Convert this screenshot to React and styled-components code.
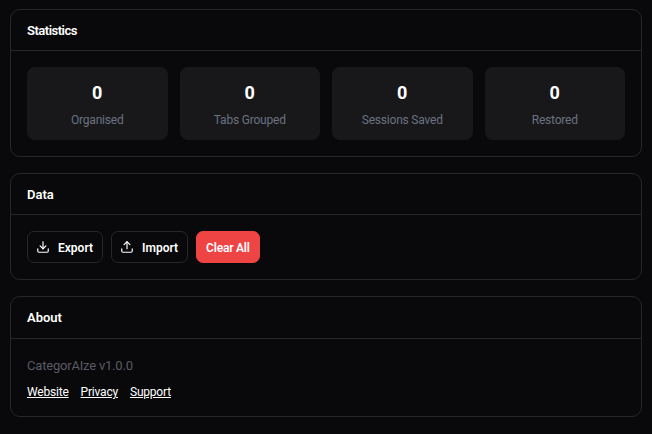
import React from "react";
import styled, { createGlobalStyle } from "styled-components";

const FONT = `Roboto, "Noto Sans", sans-serif`;
const Global = createGlobalStyle`
  html, body { margin: 0; padding: 0; background: #09090b; }
  body { font-family: ${FONT}; color: #fff; }
  * { box-sizing: border-box; }
`;
const Page = styled.div`
  display: flex; flex-direction: column; gap: 16px;
  padding: 9px 10px 16px;
`;
const Card = styled.section`
  border: 1px solid #27272a; border-radius: 10px; background: #09090b;
`;
const CardHeader = styled.header`
  height: ${p => (p.$tall ? 42 : 41)}px; padding: ${p => (p.$tall ? 0 : 1)}px 16px 0; display: flex; align-items: center;
  border-bottom: 1px solid #27272a;
`;
const Title = styled.h2`
  margin: 0; font-size: 13px; font-weight: 600; line-height: 18px; color: #fff;
  letter-spacing: ${p => p.$tracking || 0}px;
`;
const CardBody = styled.div`padding: 16px;`;
const StatGrid = styled.div`
  display: grid; grid-template-columns: repeat(4, 1fr); gap: 12px;
`;
const Stat = styled.div`
  height: 73px; border-radius: 8px; background: #18181b;
  display: flex; flex-direction: column; align-items: center; padding-top: 13px;
`;
const StatValue = styled.div`
  font-size: 18px; font-weight: 700; line-height: 25px; color: #fff;
`;
const StatLabel = styled.div`
  margin-top: 7px; font-size: 12px; line-height: 17px; color: #6b7280; letter-spacing: -0.2px;
`;
const Actions = styled.div`display: flex; gap: 8px;`;
const Button = styled.button`
  height: 32px; padding: 2px 9px 0 ${p => (p.$danger ? 9 : 8)}px; display: flex; align-items: center; gap: 8px;
  font: 600 12px ${FONT}; color: #fff;
  border-radius: 7px; cursor: pointer;
  letter-spacing: ${p => (p.$danger ? -0.2 : 0)}px;
  border: 1px solid ${p => (p.$danger ? "#ef4444" : "#27272a")};
  background: ${p => (p.$danger ? "#ef4444" : "transparent")};
  svg { margin-top: -2px; }
`;
const Version = styled.p`
  margin: 2px 0 0; font-size: 13px; line-height: 18px; color: #5a5a63; letter-spacing: -0.2px;
`;
const Links = styled.nav`display: flex; gap: 12px; margin-top: 9px; height: 16px;`;
const Link = styled.a`
  font-size: 12px; font-weight: 400; line-height: 17px; color: #fff; text-decoration: underline;
  letter-spacing: -0.2px;
`;

const ExportIcon = ({ up }) => (
  <svg width="14" height="14" viewBox="0 0 24 24" fill="none" stroke="currentColor" strokeWidth="2" strokeLinecap="round" strokeLinejoin="round">
    <path d="M21 15v4a2 2 0 0 1-2 2H5a2 2 0 0 1-2-2v-4" />
    {up ? <><polyline points="17 8 12 3 7 8" /><line x1="12" y1="3" x2="12" y2="15" /></>
        : <><polyline points="7 10 12 15 17 10" /><line x1="12" y1="15" x2="12" y2="3" /></>}
  </svg>
);

export default function App() {
  const stats = [["0", "Organised"], ["0", "Tabs Grouped"], ["0", "Sessions Saved"], ["0", "Restored"]];
  return (
    <>
      <Global />
      <Page>
        <Card>
          <CardHeader><Title $tracking={-0.5}>Statistics</Title></CardHeader>
          <CardBody>
            <StatGrid>
              {stats.map(([v, l]) => (
                <Stat key={l}><StatValue>{v}</StatValue><StatLabel>{l}</StatLabel></Stat>
              ))}
            </StatGrid>
          </CardBody>
        </Card>
        <Card>
          <CardHeader><Title>Data</Title></CardHeader>
          <CardBody>
            <Actions>
              <Button><ExportIcon />Export</Button>
              <Button><ExportIcon up />Import</Button>
              <Button $danger>Clear All</Button>
            </Actions>
          </CardBody>
        </Card>
        <Card>
          <CardHeader $tall><Title>About</Title></CardHeader>
          <CardBody>
            <Version>CategorAIze v1.0.0</Version>
            <Links>
              <Link href="#">Website</Link>
              <Link href="#">Privacy</Link>
              <Link href="#">Support</Link>
            </Links>
          </CardBody>
        </Card>
      </Page>
    </>
  );
}
